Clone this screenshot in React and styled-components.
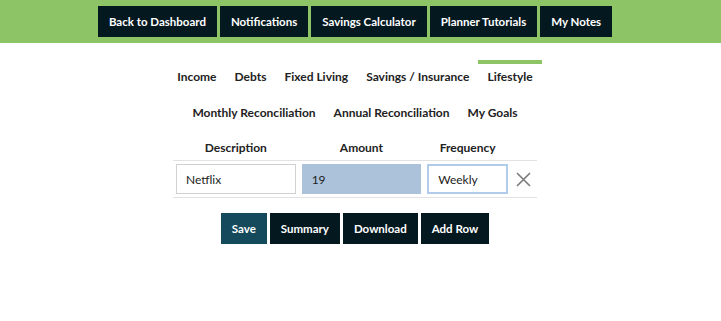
import React, { useState } from 'react';
import styled, { createGlobalStyle } from 'styled-components';

const GlobalStyle = createGlobalStyle`
  body {
    margin: 0;
    background: #fff;
    font-family: Lato, "Liberation Sans", sans-serif;
    color: #1d1d1d;
  }
`;

const TopBar = styled.header`
  background: #8cc466;
  height: 43px;
  display: flex;
  justify-content: center;
  align-items: flex-start;
  gap: 3px;
  padding: 6px 11px 0 0;
  box-sizing: border-box;
`;

const DarkButton = styled.button`
  height: 31px;
  padding: 0 11px;
  border: none;
  background: ${(p) => (p.$primary ? '#154a5c' : '#041820')};
  color: #fff;
  font-family: Lato, "Liberation Sans", sans-serif;
  font-weight: 700;
  font-size: 11.5px;
  cursor: pointer;
  white-space: nowrap;
`;

const Main = styled.main`
  padding-right: 11px;
  display: flex;
  flex-direction: column;
  align-items: center;
`;

const TabRow = styled.nav`
  display: flex;
  justify-content: center;
  margin-top: ${(p) => p.$top || 0}px;
`;

const Tab = styled.div`
  border-top: 4px solid ${(p) => (p.$active ? '#8cc466' : 'transparent')};
  padding: 5px 9px 11px;
  font-size: 12px;
  line-height: 16px;
  font-weight: 700;
  color: #222;
  cursor: pointer;
`;

const Table = styled.table`
  border-collapse: collapse;
  margin-top: 2px;
  width: 364px;
`;

const Th = styled.th`
  font-size: 12px;
  font-weight: 700;
  height: 26px;
  padding: 0;
  text-align: center;
  color: #222;
  width: ${(p) => p.$w}px;
`;

const Td = styled.td`
  border-top: 1px solid #e2e2e2;
  border-bottom: 1px solid #e2e2e2;
  padding: 3px 3px;
  height: 30px;
`;

const Input = styled.input`
  box-sizing: border-box;
  width: 100%;
  height: 30px;
  padding: 0 9px;
  font-family: Lato, "Liberation Sans", sans-serif;
  font-size: 12px;
  color: #222;
  border: ${(p) => (p.$focus ? '2px solid #b3cbea' : '1px solid #d0d0d0')};
  background: ${(p) => (p.$filled ? '#abc2da' : '#fff')};
  ${(p) => p.$filled && 'border-color: #abc2da;'}
  outline: none;
`;

const RemoveButton = styled.button`
  border: none;
  background: none;
  padding: 0;
  display: flex;
  align-items: center;
  justify-content: center;
  width: 20px;
  cursor: pointer;
`;

const Actions = styled.div`
  display: flex;
  gap: 3px;
  margin-top: 15px;
`;

const tabsTop = ['Income', 'Debts', 'Fixed Living', 'Savings / Insurance', 'Lifestyle'];
const tabsBottom = ['Monthly Reconciliation', 'Annual Reconciliation', 'My Goals'];

const App = () => {
  const [row, setRow] = useState({ desc: 'Netflix', amount: '19', freq: 'Weekly' });

  return (
    <>
      <GlobalStyle />
      <TopBar>
        <DarkButton>Back to Dashboard</DarkButton>
        <DarkButton>Notifications</DarkButton>
        <DarkButton>Savings Calculator</DarkButton>
        <DarkButton>Planner Tutorials</DarkButton>
        <DarkButton>My Notes</DarkButton>
      </TopBar>
      <Main>
        <TabRow $top={17}>
          {tabsTop.map((t) => (
            <Tab key={t} $active={t === 'Lifestyle'}>{t}</Tab>
          ))}
        </TabRow>
        <TabRow>
          {tabsBottom.map((t) => (
            <Tab key={t}>{t}</Tab>
          ))}
        </TabRow>
        <Table>
          <thead>
            <tr>
              <Th $w={126}>Description</Th>
              <Th $w={126}>Amount</Th>
              <Th $w={87}>Frequency</Th>
              <Th $w={25}></Th>
            </tr>
          </thead>
          <tbody>
            <tr>
              <Td>
                <Input value={row.desc} onChange={(e) => setRow({ ...row, desc: e.target.value })} />
              </Td>
              <Td>
                <Input $filled value={row.amount} onChange={(e) => setRow({ ...row, amount: e.target.value })} />
              </Td>
              <Td>
                <Input $focus value={row.freq} onChange={(e) => setRow({ ...row, freq: e.target.value })} />
              </Td>
              <Td>
                <RemoveButton aria-label="Remove row">
                  <svg width="15" height="15" viewBox="0 0 15 15">
                    <path d="M1 1 L14 14 M14 1 L1 14" stroke="#7a7a7a" strokeWidth="1.6" fill="none" />
                  </svg>
                </RemoveButton>
              </Td>
            </tr>
          </tbody>
        </Table>
        <Actions>
          <DarkButton $primary>Save</DarkButton>
          <DarkButton>Summary</DarkButton>
          <DarkButton>Download</DarkButton>
          <DarkButton>Add Row</DarkButton>
        </Actions>
      </Main>
    </>
  );
};

export default App;
